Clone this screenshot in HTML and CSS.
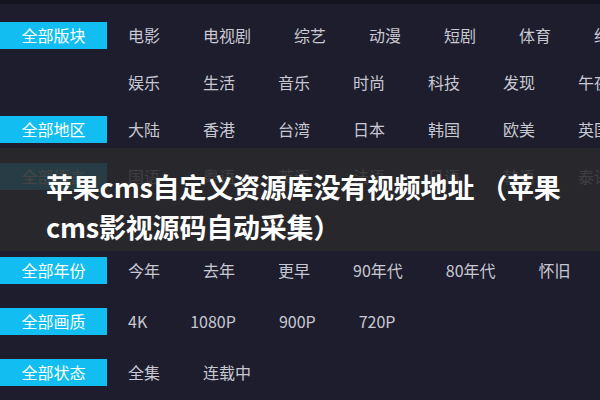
FILE: index.html
```html
<!DOCTYPE html>
<html lang="zh-CN">
<head>
<meta charset="utf-8">
<title>苹果cms自定义资源库没有视频地址</title>
<link rel="stylesheet" href="styles.css">
</head>
<body>
<div class="page">
  <div class="filters">
    <div class="row"><span class="label">全部版块</span><ul class="items"><li>电影</li><li>电视剧</li><li>综艺</li><li>动漫</li><li>短剧</li><li>体育</li><li>纪录</li></ul></div>
    <div class="row"><span class="label blank"></span><ul class="items"><li>娱乐</li><li>生活</li><li>音乐</li><li>时尚</li><li>科技</li><li>发现</li><li>午夜</li></ul></div>
    <div class="row"><span class="label">全部地区</span><ul class="items"><li>大陆</li><li>香港</li><li>台湾</li><li>日本</li><li>韩国</li><li>欧美</li><li>英国</li></ul></div>
    <div class="row"><span class="label">全部语言</span><ul class="items"><li>国语</li><li>粤语</li><li>英语</li><li>法语</li><li>日语</li><li>韩语</li><li>泰语</li></ul></div>
    <div class="row"><span class="label blank"></span><ul class="items"></ul></div>
    <div class="row"><span class="label">全部年份</span><ul class="items"><li>今年</li><li>去年</li><li>更早</li><li>90年代</li><li>80年代</li><li>怀旧</li></ul></div>
    <div class="row spaced"><span class="label">全部画质</span><ul class="items"><li>4K</li><li>1080P</li><li>900P</li><li>720P</li></ul></div>
    <div class="row spaced"><span class="label">全部状态</span><ul class="items"><li>全集</li><li>连载中</li></ul></div>
  </div>
  <div class="banner">
    <h1 class="title">苹果cms自定义资源库没有视频地址 （苹果<br>cms影视源码自动采集）</h1>
  </div>
</div>
</body>
</html>
```

FILE: styles.css
```css
* { box-sizing: border-box; }
html, body {
  margin: 0;
  padding: 0;
  background: #1d1d2d;
}
body {
  width: 600px;
  height: 400px;
  overflow: hidden;
  font-family: "Noto Sans CJK SC", "Noto Sans", sans-serif;
}
.page {
  position: relative;
  width: 600px;
  height: 400px;
  border-top: 4px solid #14141e;
  overflow: hidden;
}
.filters {
  padding-top: 8px;
}
.row {
  display: flex;
  align-items: center;
  height: 47px;
  white-space: nowrap;
}
.row.spaced {
  margin-top: 4px;
}
.label {
  flex: 0 0 107px;
  height: 27px;
  line-height: 27px;
  background: #12bdf2;
  color: #ffffff;
  font-size: 16px;
  text-align: center;
  margin-right: 21px;
}
.label.blank {
  background: transparent;
}
.items {
  display: flex;
  gap: 43px;
  margin: 0;
  padding: 0;
  list-style: none;
  font-size: 16px;
  line-height: 27px;
  color: #c8c8d2;
}
.banner {
  position: absolute;
  left: 0;
  right: 0;
  top: 144px;
  height: 103px;
  background: rgba(42, 42, 44, 0.88);
  padding: 19px 0 0 46px;
}
.title {
  margin: 0;
  font-size: 27px;
  line-height: 40px;
  font-weight: 700;
  color: #ffffff;
  letter-spacing: -0.2px;
  white-space: nowrap;
}
```
